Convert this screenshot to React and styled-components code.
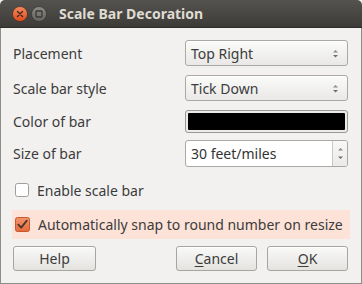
import React from "react";
import styled, { createGlobalStyle } from "styled-components";

const Global = createGlobalStyle`
  html, body { margin: 0; padding: 0; background: #f2f1f0; }
  body { font-family: "Noto Sans", "DejaVu Sans", sans-serif; font-size: 14px; color: #3c3c3c; }
  * { box-sizing: border-box; }
`;

const Window = styled.div`
  width: 362px;
  height: 284px;
  display: flex;
  flex-direction: column;
  background: #f2f1f0;
`;

const TitleBar = styled.div`
  height: 28px;
  flex: none;
  display: flex;
  align-items: center;
  padding-left: 12px;
  background: linear-gradient(#55534f, #3c3b37);
  border-radius: 5px 5px 0 0;
  border-bottom: 1px solid #2c2b28;
`;

const WinButtons = styled.div`
  display: flex;
  gap: 3px;
  align-items: center;
`;

const Title = styled.div`
  margin-left: 12px;
  font-family: "Noto Sans", "DejaVu Sans", sans-serif;
  font-weight: bold;
  font-size: 14px;
  color: #dfdbd2;
`;

const Body = styled.div`
  flex: 1;
  display: flex;
  flex-direction: column;
  border: 1px solid #8e8d8a;
  border-top: none;
  padding: 12px 13px 11px 11px;
`;

const FormRow = styled.div`
  display: flex;
  align-items: center;
  height: ${(p) => p.$h}px;
  margin-top: ${(p) => p.$top}px;
`;

const Label = styled.div`
  width: 173px;
  padding-left: 1px;
  flex: none;
`;

const Combo = styled.div`
  width: 163px;
  height: 100%;
  display: flex;
  align-items: center;
  justify-content: space-between;
  padding: 0 8px 0 5px;
  border: 1px solid #a9a8a4;
  border-radius: 3px;
  background: linear-gradient(#fbfbfa, #e9e8e6);
  box-shadow: inset 0 1px 0 #ffffff;
`;

const Swatch = styled.div`
  width: 163px;
  height: 100%;
  border: 1px solid #9a9994;
  border-radius: 3px;
  padding: 2px;
  background: #ecebe9;
  &::after {
    content: "";
    display: block;
    height: 100%;
    background: #000;
    border-radius: 1px;
  }
`;

const Spin = styled.div`
  width: 163px;
  height: 100%;
  display: flex;
  border: 1px solid #a9a8a4;
  border-radius: 3px;
  background: #fff;
  overflow: hidden;
`;

const SpinText = styled.div`
  flex: 1;
  display: flex;
  align-items: center;
  padding-left: 5px;
  color: #333;
`;

const SpinButtons = styled.div`
  width: 15px;
  border-left: 1px solid #c9c8c5;
  background: linear-gradient(#f8f8f7, #ebeae8);
  display: flex;
  flex-direction: column;
  align-items: center;
  justify-content: space-between;
  padding: 6px 0 6px;
`;

const CheckRow = styled.div`
  display: flex;
  align-items: center;
  gap: 8px;
  height: ${(p) => p.$h}px;
  margin-top: ${(p) => p.$top}px;
  padding-left: 3px;
  background: ${(p) => (p.$hl ? "#fde2d7" : "transparent")};
  margin-right: ${(p) => (p.$hl ? -2 : 0)}px;
`;

const Buttons = styled.div`
  display: flex;
  height: 25px;
  margin-top: 7px;
  padding-left: 1px;
  gap: 10px;
`;

const Spacer = styled.div`
  flex: 1;
`;

const Button = styled.div`
  width: ${(p) => p.$w}px;
  height: 25px;
  display: flex;
  align-items: center;
  justify-content: center;
  border: 1px solid #a6a5a1;
  border-radius: 3px;
  background: linear-gradient(#f9f9f8, #e4e3e0);
  box-shadow: inset 0 1px 0 #fff;
  color: #3c3c3c;
  u { text-decoration: underline; text-underline-offset: 2px; }
`;

const Arrows = () => (
  <svg width="7" height="9" viewBox="0 0 7 9">
    <path d="M1 3.5 L3.5 1 L6 3.5 Z" fill="#8a8a88" />
    <path d="M1 6 L3.5 8.5 L6 6 Z" fill="#6e6e6c" />
  </svg>
);

const Up = () => (
  <svg width="7" height="4" viewBox="0 0 7 4">
    <path d="M1 3.5 L3.5 1 L6 3.5 Z" fill="#8a8a88" />
  </svg>
);
const Down = () => (
  <svg width="7" height="4" viewBox="0 0 7 4">
    <path d="M1 0.5 L3.5 3 L6 0.5 Z" fill="#6e6e6c" />
  </svg>
);

const CloseBtn = () => (
  <svg width="16" height="16" viewBox="0 0 16 16">
    <defs>
      <linearGradient id="cg" x1="0" y1="0" x2="0" y2="1">
        <stop offset="0" stopColor="#f68a5c" />
        <stop offset="1" stopColor="#de4a1c" />
      </linearGradient>
    </defs>
    <circle cx="8" cy="8" r="7.5" fill="url(#cg)" stroke="#3a2a22" strokeWidth="0.6" />
    <path d="M5.5 5.5 L10.5 10.5 M10.5 5.5 L5.5 10.5" stroke="#3b2a24" strokeWidth="1.4" strokeLinecap="round" />
  </svg>
);

const MinBtn = () => (
  <svg width="16" height="16" viewBox="0 0 16 16">
    <defs>
      <linearGradient id="mg" x1="0" y1="0" x2="0" y2="1">
        <stop offset="0" stopColor="#8d8b86" />
        <stop offset="1" stopColor="#64635f" />
      </linearGradient>
    </defs>
    <circle cx="8" cy="8" r="7.5" fill="url(#mg)" stroke="#2e2d2a" strokeWidth="0.6" />
    <rect x="5" y="5" width="6" height="6" rx="0.8" fill="none" stroke="#3a3936" strokeWidth="1.3" />
  </svg>
);

const BoxUnchecked = () => (
  <svg width="14" height="14" viewBox="0 0 14 14">
    <rect x="0.5" y="0.5" width="13" height="13" rx="2" fill="#fff" stroke="#9f9e9a" />
  </svg>
);

const BoxChecked = () => (
  <svg width="15" height="15" viewBox="0 0 15 15">
    <defs>
      <linearGradient id="kg" x1="0" y1="0" x2="0" y2="1">
        <stop offset="0" stopColor="#f3956b" />
        <stop offset="1" stopColor="#e5693d" />
      </linearGradient>
    </defs>
    <rect x="0.5" y="0.5" width="14" height="14" rx="2" fill="url(#kg)" stroke="#c4582f" />
    <path d="M3.3 7.6 L6.2 10.6 L11.8 3.6" fill="none" stroke="#4a362c" strokeWidth="1.8" strokeLinecap="round" strokeLinejoin="round" />
  </svg>
);

export default function App() {
  return (
    <>
      <Global />
      <Window>
        <TitleBar>
          <WinButtons>
            <CloseBtn />
            <MinBtn />
          </WinButtons>
          <Title>Scale Bar Decoration</Title>
        </TitleBar>
        <Body>
          <FormRow $h={26} $top={0}>
            <Label>Placement</Label>
            <Combo>
              <span>Top Right</span>
              <Arrows />
            </Combo>
          </FormRow>
          <FormRow $h={26} $top={9}>
            <Label>Scale bar style</Label>
            <Combo>
              <span>Tick Down</span>
              <Arrows />
            </Combo>
          </FormRow>
          <FormRow $h={23} $top={9}>
            <Label>Color of bar</Label>
            <Swatch />
          </FormRow>
          <FormRow $h={27} $top={7}>
            <Label>Size of bar</Label>
            <Spin>
              <SpinText>30 feet/miles</SpinText>
              <SpinButtons>
                <Up />
                <Down />
              </SpinButtons>
            </Spin>
          </FormRow>
          <CheckRow $h={20} $top={13}>
            <BoxUnchecked />
            <span>Enable scale bar</span>
          </CheckRow>
          <CheckRow $h={29} $top={10} $hl>
            <BoxChecked />
            <span>Automatically snap to round number on resize</span>
          </CheckRow>
          <Buttons>
            <Button $w={83}>Help</Button>
            <Spacer />
            <Button $w={81}>
              <span><u>C</u>ancel</span>
            </Button>
            <Button $w={81}>
              <span><u>O</u>K</span>
            </Button>
          </Buttons>
        </Body>
      </Window>
    </>
  );
}
